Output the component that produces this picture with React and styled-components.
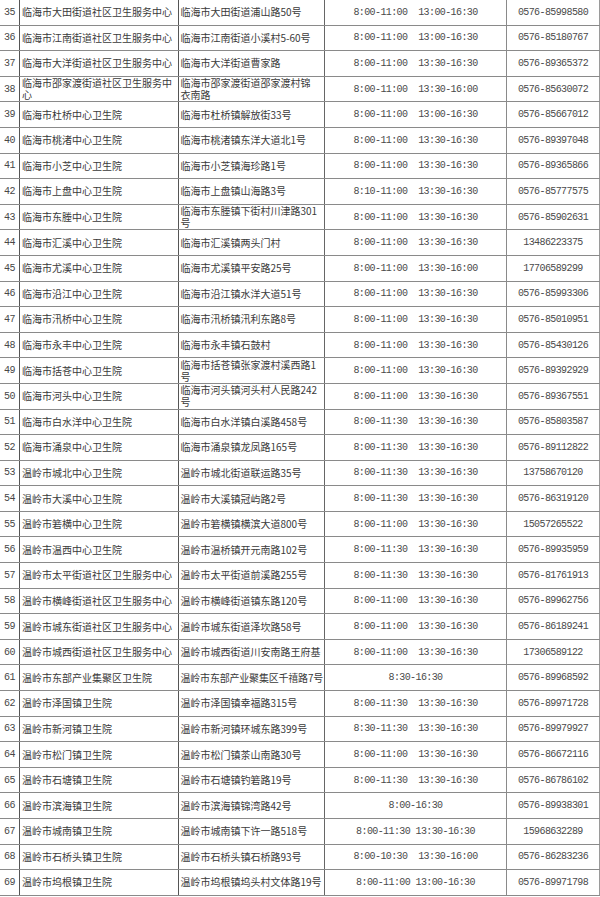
import React from 'react';
import styled, { createGlobalStyle } from 'styled-components';

const Global = createGlobalStyle`
  html, body { margin: 0; padding: 0; background: #ffffff; overflow: hidden; }
  #root { width: 600px; }
`;

const rows = [
  [35, '临海市大田街道社区卫生服务中心', '临海市大田街道浦山路50号', '8:00-11:00  13:00-16:30', '0576-85998580'],
  [36, '临海市江南街道社区卫生服务中心', '临海市江南街道小溪村5-60号', '8:00-11:00  13:00-16:30', '0576-85180767'],
  [37, '临海市大洋街道社区卫生服务中心', '临海市大洋街道曹家路', '8:00-11:00  13:30-16:30', '0576-89365372'],
  [38, '临海市邵家渡街道社区卫生服务中\n心', '临海市邵家渡街道邵家渡村锦\n衣南路', '8:00-11:00  13:30-16:00', '0576-85630072'],
  [39, '临海市杜桥中心卫生院', '临海市杜桥镇解放街33号', '8:00-11:00  13:00-16:30', '0576-85667012'],
  [40, '临海市桃渚中心卫生院', '临海市桃渚镇东洋大道北1号', '8:00-11:00  13:30-16:30', '0576-89397048'],
  [41, '临海市小芝中心卫生院', '临海市小芝镇海珍路1号', '8:00-11:00  13:30-16:30', '0576-89365866'],
  [42, '临海市上盘中心卫生院', '临海市上盘镇山海路3号', '8:10-11:00  13:30-16:30', '0576-85777575'],
  [43, '临海市东塍中心卫生院', '临海市东塍镇下街村川津路301\n号', '8:00-11:00  13:30-16:30', '0576-85902631'],
  [44, '临海市汇溪中心卫生院', '临海市汇溪镇两头门村', '8:00-11:00  13:30-16:30', '13486223375'],
  [45, '临海市尤溪中心卫生院', '临海市尤溪镇平安路25号', '8:00-11:00  13:30-16:00', '17706589299'],
  [46, '临海市沿江中心卫生院', '临海市沿江镇水洋大道51号', '8:00-11:00  13:30-16:30', '0576-85993306'],
  [47, '临海市汛桥中心卫生院', '临海市汛桥镇汛利东路8号', '8:00-11:00  13:30-16:30', '0576-85010951'],
  [48, '临海市永丰中心卫生院', '临海市永丰镇石鼓村', '8:00-11:00  13:30-16:30', '0576-85430126'],
  [49, '临海市括苍中心卫生院', '临海市括苍镇张家渡村溪西路1\n号', '8:00-11:00  13:30-16:30', '0576-89392929'],
  [50, '临海市河头中心卫生院', '临海市河头镇河头村人民路242\n号', '8:00-11:00  13:30-16:30', '0576-89367551'],
  [51, '临海市白水洋中心卫生院', '临海市白水洋镇白溪路458号', '8:00-11:30  13:30-16:30', '0576-85803587'],
  [52, '临海市涌泉中心卫生院', '临海市涌泉镇龙凤路165号', '8:00-11:30  13:30-16:30', '0576-89112822'],
  [53, '温岭市城北中心卫生院', '温岭市城北街道联运路35号', '8:00-11:30  13:30-16:30', '13758670120'],
  [54, '温岭市大溪中心卫生院', '温岭市大溪镇冠屿路2号', '8:00-11:30  13:30-16:30', '0576-86319120'],
  [55, '温岭市箬横中心卫生院', '温岭市箬横镇横滨大道800号', '8:00-11:00  13:30-16:30', '15057265522'],
  [56, '温岭市温西中心卫生院', '温岭市温桥镇开元南路102号', '8:00-11:30  13:30-16:30', '0576-89935959'],
  [57, '温岭市太平街道社区卫生服务中心', '温岭市太平街道前溪路255号', '8:00-11:30  13:30-16:30', '0576-81761913'],
  [58, '温岭市横峰街道社区卫生服务中心', '温岭市横峰街道镇东路120号', '8:00-11:00  13:30-16:30', '0576-89962756'],
  [59, '温岭市城东街道社区卫生服务中心', '温岭市城东街道泽坎路58号', '8:00-11:00  13:30-16:30', '0576-86189241'],
  [60, '温岭市城西街道社区卫生服务中心', '温岭市城西街道川安南路王府基', '8:00-11:00  13:30-16:30', '17306589122'],
  [61, '温岭市东部产业集聚区卫生院', '温岭市东部产业聚集区千禧路7号', '8:30-16:30', '0576-89968592', true],
  [62, '温岭市泽国镇卫生院', '温岭市泽国镇幸福路315号', '8:00-11:30  13:30-16:30', '0576-89971728'],
  [63, '温岭市新河镇卫生院', '温岭市新河镇环城东路399号', '8:30-11:30  13:30-16:30', '0576-89979927'],
  [64, '温岭市松门镇卫生院', '温岭市松门镇茶山南路30号', '8:00-11:00  13:30-16:30', '0576-86672116'],
  [65, '温岭市石塘镇卫生院', '温岭市石塘镇钓箬路19号', '8:00-11:30  13:30-16:30', '0576-86786102'],
  [66, '温岭市滨海镇卫生院', '温岭市滨海镇锦湾路42号', '8:00-16:30', '0576-89938301'],
  [67, '温岭市城南镇卫生院', '温岭市城南镇下许一路518号', '8:00-11:30 13:30-16:30', '15968632289'],
  [68, '温岭市石桥头镇卫生院', '温岭市石桥头镇石桥路93号', '8:00-10:30  13:30-16:00', '0576-86283236'],
  [69, '温岭市坞根镇卫生院', '温岭市坞根镇坞头村文体路19号', '8:00-11:00 13:00-16:30', '0576-89971798'],
];

const Table = styled.div`
  width: 600px;
  display: grid;
  grid-template-rows: repeat(35, 25.6px);
  background: #ffffff;
  color: #3c3c3c;
`;

const Row = styled.div`
  display: grid;
  grid-template-columns: 20px 159px 146px 182px 93px;
  border-bottom: 1px solid #8a8a8a;
  box-sizing: border-box;
  min-height: 0;
`;

const Cell = styled.div`
  display: flex;
  align-items: center;
  box-sizing: border-box;
  border-right: 1px solid ${(p) => p.$line || '#6e6e6e'};
  overflow-x: clip;
  overflow-y: visible;
  min-width: 0;
  min-height: 0;
`;

const NumCell = styled(Cell)`
  justify-content: center;
  font-family: "Liberation Mono", monospace;
  font-size: 10px;
  letter-spacing: -0.6px;
  color: #474747;
`;

const TextCell = styled(Cell)`
  padding-left: ${(p) => p.$pad}px;
  font-family: "Noto Sans CJK SC", "Noto Sans", sans-serif;
  font-size: 10px;
  line-height: 12px;
  letter-spacing: ${(p) => (p.$tight ? '-0.2px' : '0')};
  white-space: pre;
  color: #3a3a3a;
`;

const MonoCell = styled(Cell)`
  justify-content: center;
  font-family: "Liberation Mono", monospace;
  font-size: 10px;
  letter-spacing: -0.6px;
  white-space: pre;
  color: #4a4a4a;
`;

export default function App() {
  return (
    <>
      <Global />
      <Table>
        {rows.map(([n, name, addr, hours, phone, tight]) => (
          <Row key={n}>
            <NumCell $line="#555">{n}</NumCell>
            <TextCell $pad={2} $line="#555">{name}</TextCell>
            <TextCell $pad={1.5} $line="#666" $tight={tight}>{addr}</TextCell>
            <MonoCell $line="#8a8a8a">{hours}</MonoCell>
            <MonoCell $line="#9a9a9a">{phone}</MonoCell>
          </Row>
        ))}
      </Table>
    </>
  );
}
